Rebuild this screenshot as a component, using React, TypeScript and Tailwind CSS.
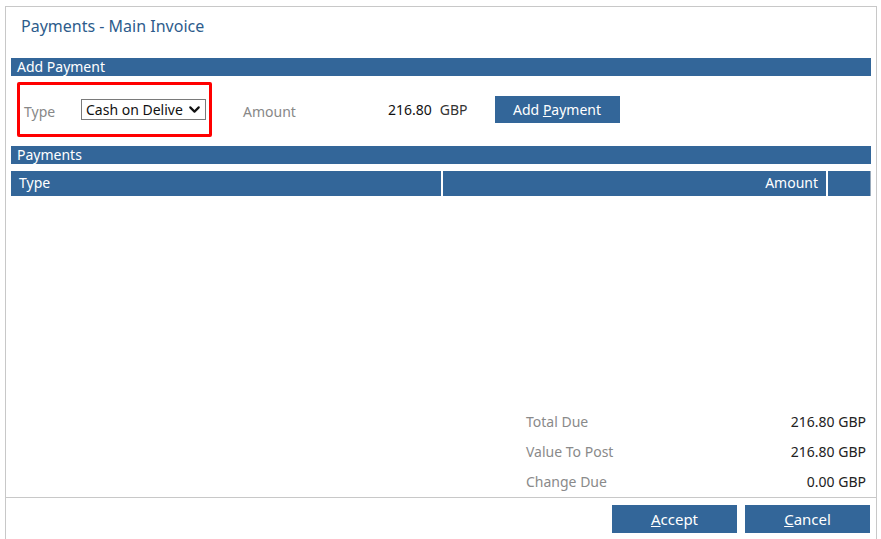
import { ChevronDown } from "lucide-react";

const font = { fontFamily: '"Noto Sans", "Open Sans", sans-serif' };

function Bar({ title }: { title: string }) {
  return (
    <div className="h-[18px] bg-[#336699] pl-[6px] text-[14px] leading-[18px] text-white">{title}</div>
  );
}

function Total({ label, value }: { label: string; value: string }) {
  return (
    <div className="flex h-[30px] items-center">
      <span className="w-[200px] text-[#8a8a8a]">{label}</span>
      <span className="flex-1 text-right text-[#222]">{value}</span>
    </div>
  );
}

export default function App() {
  return (
    <div className="h-[539px] w-[881px] overflow-hidden bg-white text-[14px]" style={font}>
      <div className="ml-[5px] mt-[6px] flex h-[533px] w-[872px] flex-col border-x border-t border-[#c8c8c8]">
        <div className="px-[15px] pt-[9px] text-[16px] leading-[20px] text-[#2d5c8c]">Payments - Main Invoice</div>

        <div className="mt-[22px] px-[5px]">
          <Bar title="Add Payment" />
          <div className="flex h-[70px] items-center pb-[4px]">
            <div className="ml-[6px] flex h-[55px] w-[195px] items-center rounded-[2px] border-[3px] border-[#ff0000] pl-[4px]">
              <span className="mt-[5px] w-[57px] text-[#888]">Type</span>
              <div className="flex h-[21px] w-[125px] items-center justify-between border border-[#7a7a7a] bg-white pl-[4px] pr-[2px] text-[#111]">
                <span className="overflow-hidden whitespace-nowrap">Cash on Delive</span>
                <ChevronDown size={17} strokeWidth={3} className="shrink-0" />
              </div>
            </div>
            <span className="ml-[31px] mt-[5px] w-[100px] text-[#888]">Amount</span>
            <span className="ml-[45px] text-[#111]">216.80</span>
            <span className="ml-[8px] text-[#333]">GBP</span>
            <button className="ml-[27px] h-[27px] w-[125px] bg-[#336699] text-white">
              Add <span className="underline">P</span>ayment
            </button>
          </div>
          <Bar title="Payments" />
          <div className="mt-[7px] flex h-[25px] bg-[#336699] text-white">
            <div className="w-[432px] border-r-2 border-white pl-[8px] leading-[24px]">Type</div>
            <div className="w-[385px] border-r-2 border-white pr-[8px] text-right leading-[24px]">Amount</div>
            <div className="flex-1 border-r border-[#9ab]" />
          </div>
        </div>

        <div className="flex-1" />

        <div className="ml-auto w-[350px] pr-[10px] pb-[1px]">
          <Total label="Total Due" value="216.80 GBP" />
          <Total label="Value To Post" value="216.80 GBP" />
          <Total label="Change Due" value="0.00 GBP" />
        </div>

        <div className="flex h-[42px] justify-end gap-[8px] border-t border-[#c8c8c8] pr-[6px] pt-[7px]">
          <button className="h-[28px] w-[125px] bg-[#336699] text-[15px] text-white">
            <span className="underline">A</span>ccept
          </button>
          <button className="h-[28px] w-[125px] bg-[#336699] text-[15px] text-white">
            <span className="underline">C</span>ancel
          </button>
        </div>
      </div>
    </div>
  );
}
